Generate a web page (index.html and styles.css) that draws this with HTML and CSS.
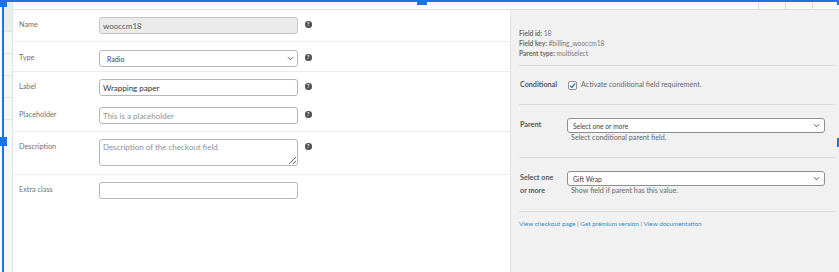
FILE: index.html
```html
<!DOCTYPE html>
<html lang="en">
<head>
<meta charset="utf-8">
<title>Field settings</title>
<link rel="stylesheet" href="styles.css">
</head>
<body>
<div class="page">
  <div class="backdrop">
    <div class="bd-row bd-first"></div>
    <div class="bd-row"></div>
    <div class="bd-row"></div>
    <div class="bd-row"></div>
    <div class="bd-row"></div>
  </div>
  <div class="modal">
    <div class="modal-head">
      <div class="head-spacer"></div>
      <div class="head-btn"></div>
      <div class="head-btn"></div>
      <div class="head-btn"></div>
    </div>
    <div class="modal-body">
      <div class="form">
        <div class="row row-name">
          <span class="lbl">Name</span>
          <input class="ctl ctl-disabled" value="wooccm18" readonly>
          <span class="help">?</span>
        </div>
        <div class="row row-type">
          <span class="lbl">Type</span>
          <div class="ctl sel">
            <span class="sel-text">Radio</span>
            <svg class="chev" viewBox="0 0 8 5" width="7" height="5"><path d="M1 1l3 3 3-3" fill="none" stroke="#555" stroke-width="1.1"/></svg>
          </div>
          <span class="help">?</span>
        </div>
        <div class="row row-group">
          <div class="sub">
            <span class="lbl">Label</span>
            <input class="ctl" value="Wrapping paper">
            <span class="help">?</span>
          </div>
          <div class="sub">
            <span class="lbl">Placeholder</span>
            <input class="ctl" placeholder="This is a placeholder">
            <span class="help">?</span>
          </div>
        </div>
        <div class="row row-desc">
          <span class="lbl">Description</span>
          <textarea class="ctl area" placeholder="Description of the checkout field"></textarea>
          <span class="help">?</span>
        </div>
        <div class="row row-extra">
          <span class="lbl">Extra class</span>
          <input class="ctl">
        </div>
      </div>
      <aside class="side">
        <div class="info">
          <div><b>Field id:</b> 18</div>
          <div><b>Field key:</b> #billing_wooccm18</div>
          <div><b>Parent type:</b> multiselect</div>
        </div>
        <div class="srow srow-cond">
          <span class="slbl">Conditional</span>
          <span class="check">
            <svg viewBox="0 0 9 9" width="9" height="9"><path d="M2 4.6l1.8 1.9L7.3 2.4" fill="none" stroke="#2271b1" stroke-width="1.2"/></svg>
          </span>
          <span class="cond-text">Activate conditional field requirement.</span>
        </div>
        <div class="srow">
          <span class="slbl">Parent</span>
          <div class="sval">
            <div class="ssel">
              <span>Select one or more</span>
              <svg class="chev" viewBox="0 0 8 5" width="7" height="5"><path d="M1 1l3 3 3-3" fill="none" stroke="#555" stroke-width="1.1"/></svg>
            </div>
            <div class="sdesc">Select conditional parent field.</div>
          </div>
        </div>
        <div class="srow">
          <span class="slbl">Select one<br>or more</span>
          <div class="sval">
            <div class="ssel">
              <span>Gift Wrap</span>
              <svg class="chev" viewBox="0 0 8 5" width="7" height="5"><path d="M1 1l3 3 3-3" fill="none" stroke="#555" stroke-width="1.1"/></svg>
            </div>
            <div class="sdesc">Show field if parent has this value.</div>
          </div>
        </div>
        <div class="links">
          <a href="#">View checkout page</a> <span class="sep">|</span> <a href="#">Get premium version</a> <span class="sep">|</span> <a href="#">View documentation</a>
        </div>
      </aside>
    </div>
  </div>
</div>
<div class="selbox">
  <div class="sl sl-top"></div>
  <div class="sl sl-left"></div>
  <div class="hd hd-tl"></div>
  <div class="hd hd-tc"></div>
  <div class="hd hd-tr"></div>
  <div class="hd hd-ml"></div>
  <div class="hd hd-mr"></div>
</div>
</body>
</html>
```

FILE: styles.css
```css
* { box-sizing: border-box; }
html, body { margin: 0; padding: 0; }
body {
  width: 839px;
  height: 272px;
  overflow: hidden;
  background: #fff;
  font-family: Lato, "Liberation Sans", sans-serif;
  position: relative;
}
.page { display: flex; height: 272px; }

/* backdrop strip */
.backdrop {
  width: 8px;
  margin-left: 4px;
  background: #f7f7f7;
  display: flex;
  flex-direction: column;
}
.bd-row { height: 22px; border-bottom: 1px solid #e4e4e4; }
.bd-first { height: 32px; background: #ececec; }

/* modal */
.modal {
  flex: 1;
  display: flex;
  flex-direction: column;
  border-left: 1px solid #e3e3e3;
}
.modal-head {
  height: 10px;
  display: flex;
  border-bottom: 1px solid #dddddd;
  background: #fff;
  box-shadow: 0 1px 2px rgba(0,0,0,0.04);
}
.head-spacer { flex: 1; }
.head-btn {
  width: 27px;
  background: #fafafa;
  border-left: 1px solid #dedede;
}
.modal-body { flex: 1; display: flex; }

/* form */
.form {
  width: 497px;
  padding-left: 6px;
  background: #fff;
}
.row, .sub {
  display: flex;
  align-items: flex-start;
}
.row { border-bottom: 1px solid #ececec; margin-left: -6px; padding-left: 6px; }
.row-name { padding-top: 7px; padding-bottom: 7px; }
.row-type { padding-top: 8px; padding-bottom: 4px; }
.row-group { flex-direction: column; padding-top: 7px; padding-bottom: 7px; gap: 11px; }
.row-desc { padding-top: 7px; padding-bottom: 8px; }
.row-extra { padding-top: 7px; border-bottom: none; }

.lbl {
  width: 80px;
  line-height: 16px;
  font-size: 7.3px;
  color: #707274;
}
.ctl {
  width: 199px;
  height: 17px;
  margin: 0;
  border: 1px solid #b4b7ba;
  border-radius: 3px;
  padding: 0 3px;
  font-family: Lato, "Liberation Sans", sans-serif;
  font-size: 8px;
  color: #2c3338;
  background: #fff;
  outline: none;
}
.ctl::placeholder { color: #8e9194; }
.ctl-disabled { background: #ebebeb; border-color: #c4c6c8; color: #50575e; }
.area {
  height: 27px;
  padding-top: 2px;
  resize: vertical;
  line-height: 11px;
}
.sel {
  display: flex;
  align-items: center;
  justify-content: space-between;
  padding: 0 3px 0 7px;
}
.sel-text { font-size: 7px; color: #3c434a; }
.chev { display: block; }
.help {
  width: 6.5px;
  height: 6.5px;
  margin-left: 7px;
  margin-top: 4px;
  border-radius: 50%;
  background: #4f5257;
  color: #fff;
  font-size: 5px;
  font-weight: 700;
  line-height: 6.5px;
  text-align: center;
}

/* sidebar */
.side {
  flex: 1;
  background: #f1f1f1;
  border-left: 1px solid #e2e2e2;
  padding: 0 4px 0 8px;
  font-size: 7.2px;
  color: #646970;
}
.info {
  padding: 18px 0 7px;
  border-bottom: 1px solid #dcdcdc;
  font-size: 6.6px;
  line-height: 10px;
  color: #7a7a7a;
}
.info b { color: #6a6a6a; font-weight: 700; }
.srow {
  display: flex;
  align-items: flex-start;
  padding: 13px 0 14px;
  border-bottom: 1px solid #dcdcdc;
}
.srow:last-of-type { padding-bottom: 13px; }
.srow-cond { padding: 14px 0 14px; align-items: center; }
.slbl {
  width: 38px;
  margin-right: 10px;
  padding-left: 1px;
  font-weight: 700;
  font-size: 7.2px;
  line-height: 13px;
  color: #50575e;
}
.srow-cond .slbl { line-height: 10px; }
.check {
  width: 9px;
  height: 9px;
  margin-left: 1px;
  margin-right: 4px;
  border: 1px solid #8c8f94;
  border-radius: 2px;
  background: #fff;
  display: flex;
}
.check svg { margin: -1px; }
.cond-text { line-height: 10px; color: #646970; }
.sval { width: 258px; }
.ssel {
  height: 15px;
  border: 1px solid #8c8f94;
  border-radius: 3px;
  background: #fff;
  display: flex;
  align-items: center;
  justify-content: space-between;
  padding: 0 4px 0 5px;
  font-size: 6.7px;
  color: #3c434a;
}
.sdesc { padding-left: 4px; line-height: 10px; color: #646970; }
.links {
  padding-top: 7px;
  line-height: 10px;
  font-size: 6.4px;
}
.links a { color: #2f8bcc; text-decoration: none; }
.links .sep { color: #8a8a8a; }

/* selection overlay */
.sl, .hd { position: absolute; background: #1a73e8; }
.sl-top { left: 4px; right: 0; top: 0; height: 2px; }
.sl-left { left: 2px; top: 0; bottom: 0; width: 2px; }
.hd-tl { left: 0; top: 0; width: 7px; height: 7px; }
.hd-tc { left: 417px; top: 0; width: 10px; height: 5px; }
.hd-tr { left: 837px; top: 0; width: 2px; height: 5px; }
.hd-ml { left: 0; top: 137px; width: 7px; height: 9px; }
.hd-mr { left: 837px; top: 138px; width: 2px; height: 9px; }
```
